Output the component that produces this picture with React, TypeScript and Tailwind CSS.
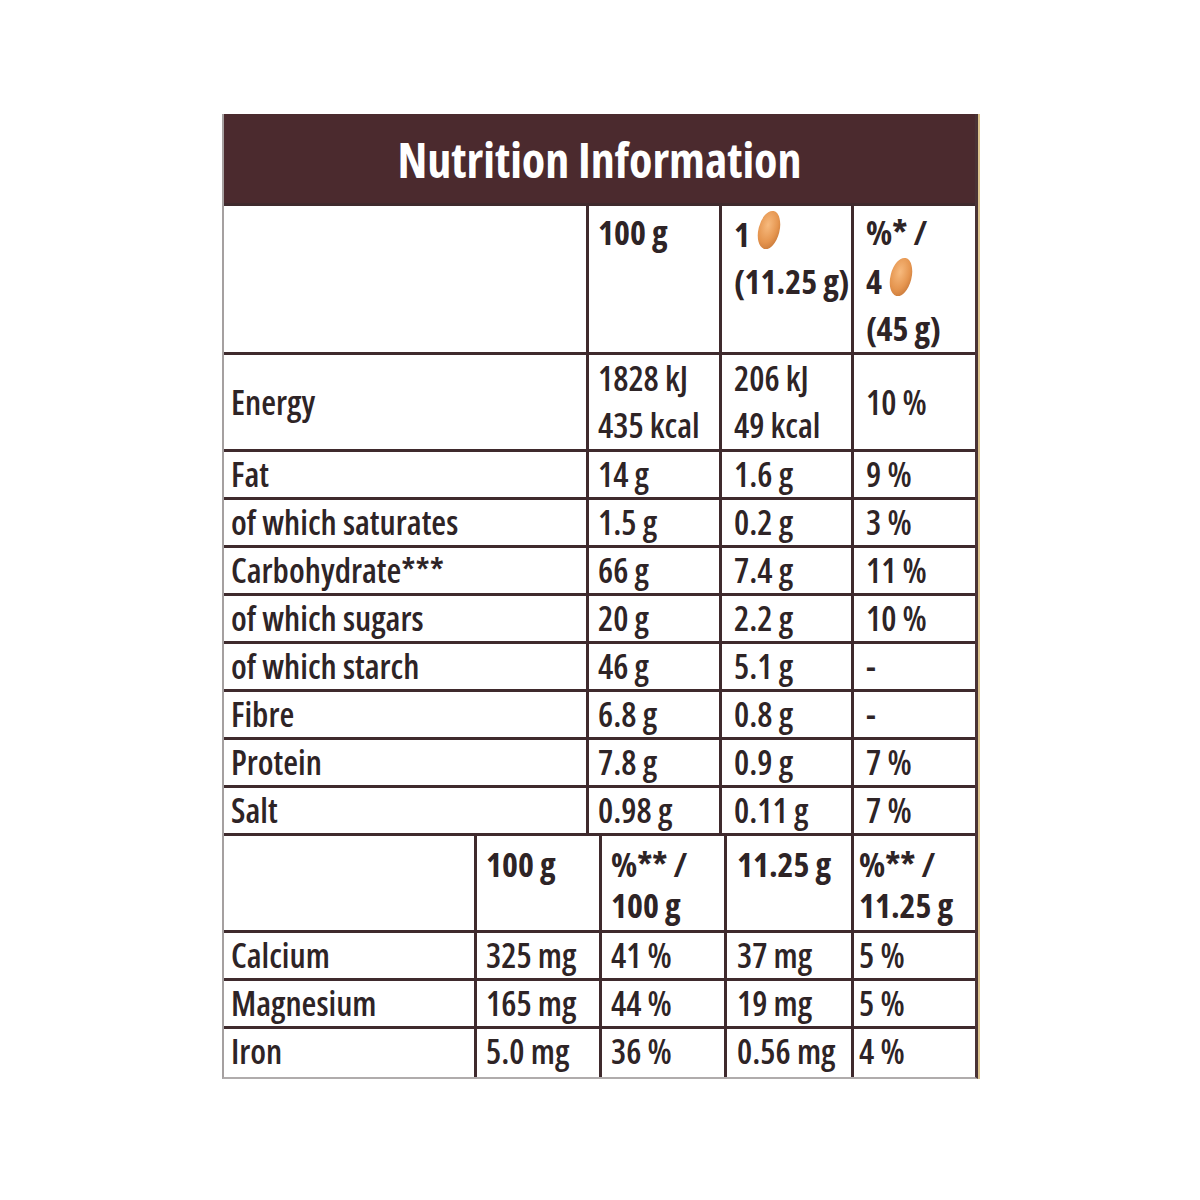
import React from 'react'

const ink = 'text-[#2e2426]'

function Nut() {
  return (
    <svg width="26" height="42" viewBox="0 0 26 42" className="inline-block align-[-4px] ml-[6px]">
      <defs>
        <radialGradient id="nutg" cx="40%" cy="38%" r="70%">
          <stop offset="0%" stopColor="#f7ba7e" />
          <stop offset="65%" stopColor="#e5954f" />
          <stop offset="100%" stopColor="#c97a3b" />
        </radialGradient>
      </defs>
      <ellipse cx="13" cy="21" rx="10.5" ry="19.5" transform="rotate(14 13 21)" fill="url(#nutg)" />
    </svg>
  )
}

const main = [
  ['Fat', '14 g', '1.6 g', '9 %'],
  ['of which saturates', '1.5 g', '0.2 g', '3 %'],
  ['Carbohydrate***', '66 g', '7.4 g', '11 %'],
  ['of which sugars', '20 g', '2.2 g', '10 %'],
  ['of which starch', '46 g', '5.1 g', '-'],
  ['Fibre', '6.8 g', '0.8 g', '-'],
  ['Protein', '7.8 g', '0.9 g', '7 %'],
  ['Salt', '0.98 g', '0.11 g', '7 %'],
]

const minerals = [
  ['Calcium', '325 mg', '41 %', '37 mg', '5 %'],
  ['Magnesium', '165 mg', '44 %', '19 mg', '5 %'],
  ['Iron', '5.0 mg', '36 %', '0.56 mg', '4 %'],
]

const top = 'grid grid-cols-[365px_133px_132px_121px]'
const bottom = 'grid grid-cols-[253px_125px_125px_127px_121px]'
const line = 'border-b-[3px] border-[#3f2a2d]'
const vr = 'border-r-[3px] border-[#3f2a2d]'

export default function App() {
  return (
    <div className="w-[1200px] h-[1200px] bg-white pt-[114px] pl-[222px] font-['Open_Sans',sans-serif] [font-stretch:75%]">
      <div className="w-[756px] border-l-2 border-l-[#a5a0a0] border-r-[3px] border-r-[#4a3336] border-b-2 border-b-[#b0acac] shadow-[2px_0_0_#dcc48e]">
        <div className="h-[89px] bg-[#4b2a2e] flex items-center justify-center">
          <h1 className="text-white text-[48px] font-bold leading-none pt-[2px]">Nutrition Information</h1>
        </div>

        <div className={`${top} h-[152px] ${line} border-t-[3px] border-t-[#3f2a2d] text-[34px] leading-[47px] font-bold ${ink}`}>
          <div className={vr} />
          <div className={`${vr} pl-[9px] pt-[3px]`}>100 g</div>
          <div className={`${vr} pl-[12px] pt-[3px] whitespace-nowrap`}>
            1<Nut />
            <br />
            (11.25 g)
          </div>
          <div className="pl-[12px] pt-[3px] whitespace-nowrap">
            %* /
            <br />4<Nut />
            <br />
            (45 g)
          </div>
        </div>

        <div className={`${top} h-[97px] ${line} text-[34px] leading-[47px] font-semibold ${ink}`}>
          <div className={`${vr} pl-[7px] flex items-center`}>Energy</div>
          <div className={`${vr} pl-[9px] whitespace-nowrap`}>
            1828 kJ
            <br />
            435 kcal
          </div>
          <div className={`${vr} pl-[12px] whitespace-nowrap`}>
            206 kJ
            <br />
            49 kcal
          </div>
          <div className="pl-[12px] flex items-center">10 %</div>
        </div>

        {main.map((r) => (
          <div key={r[0]} className={`${top} h-[48px] ${line} text-[34px] leading-[45px] font-semibold whitespace-nowrap ${ink}`}>
            <div className={`${vr} pl-[7px]`}>{r[0]}</div>
            <div className={`${vr} pl-[9px]`}>{r[1]}</div>
            <div className={`${vr} pl-[12px]`}>{r[2]}</div>
            <div className="pl-[12px]">{r[3]}</div>
          </div>
        ))}

        <div className={`${bottom} h-[97px] ${line} text-[34px] leading-[41px] font-bold whitespace-nowrap ${ink}`}>
          <div className={vr} />
          <div className={`${vr} pl-[9px] pt-[8px]`}>100 g</div>
          <div className={`${vr} pl-[9px] pt-[8px]`}>
            %** /
            <br />
            100 g
          </div>
          <div className={`${vr} pl-[10px] pt-[8px]`}>11.25 g</div>
          <div className="pl-[5px] pt-[8px]">
            %** /
            <br />
            11.25 g
          </div>
        </div>

        {minerals.map((r, i) => (
          <div key={r[0]} className={`${bottom} h-[48px] ${i < 2 ? line : ''} text-[34px] leading-[45px] font-semibold whitespace-nowrap ${ink}`}>
            <div className={`${vr} pl-[7px]`}>{r[0]}</div>
            <div className={`${vr} pl-[9px]`}>{r[1]}</div>
            <div className={`${vr} pl-[9px]`}>{r[2]}</div>
            <div className={`${vr} pl-[10px]`}>{r[3]}</div>
            <div className="pl-[5px]">{r[4]}</div>
          </div>
        ))}
      </div>
    </div>
  )
}
